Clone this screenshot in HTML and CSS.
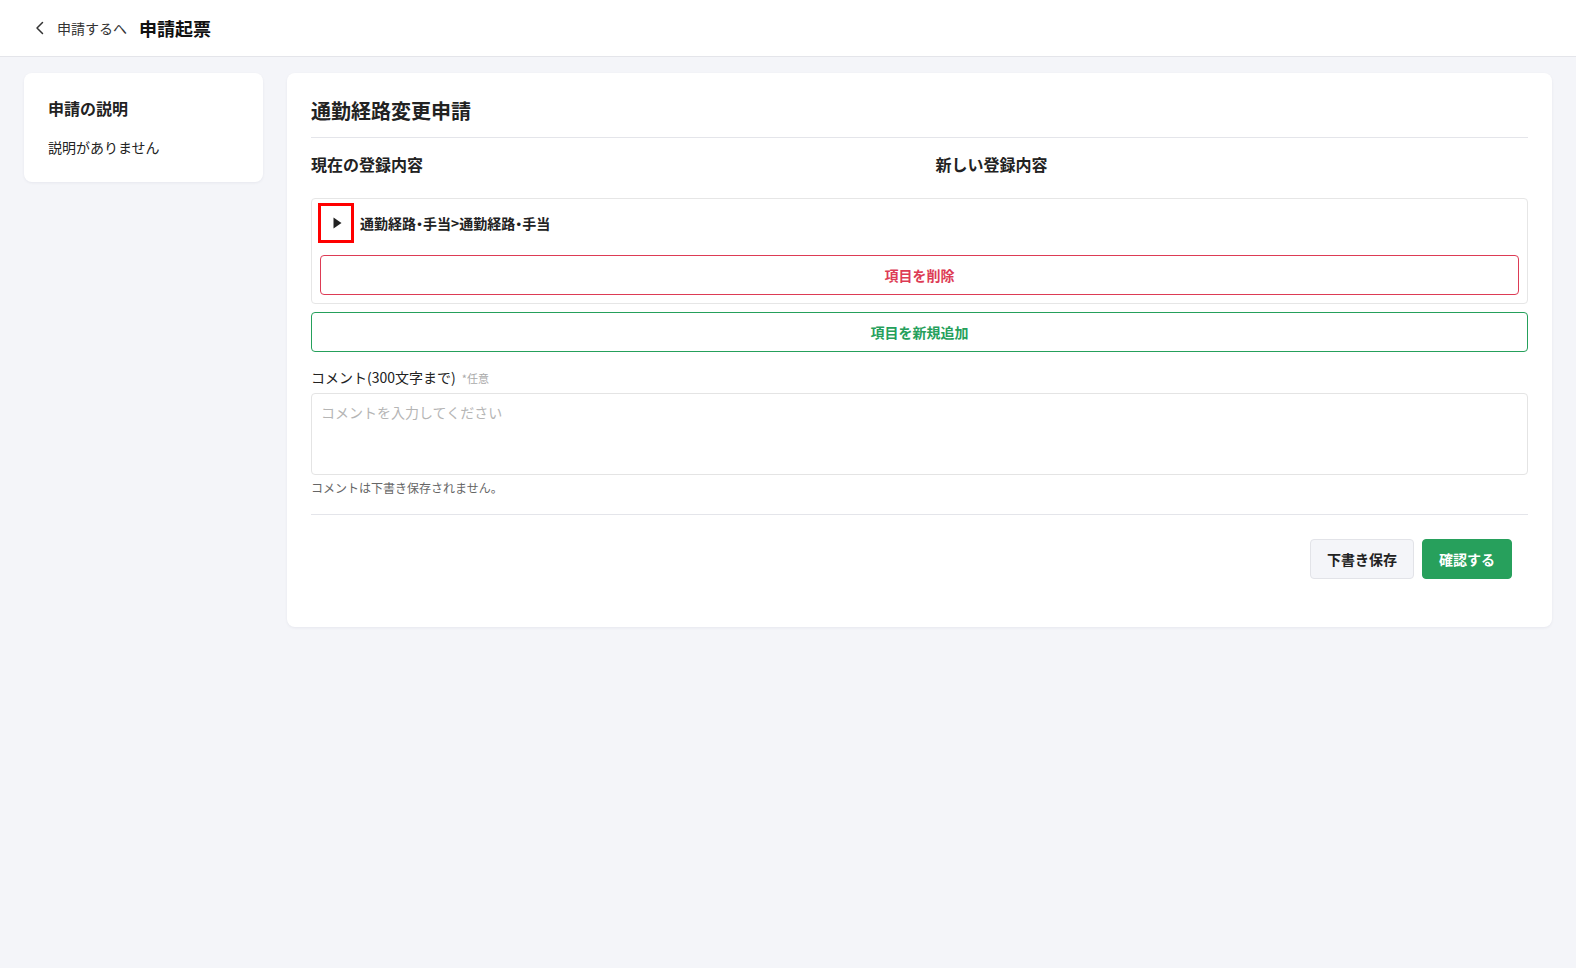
FILE: index.html
```html
<!DOCTYPE html>
<html lang="ja">
<head>
  <meta charset="UTF-8">
  <meta name="viewport" content="width=device-width, initial-scale=1.0">
  <title>申請起票</title>
  <link rel="stylesheet" href="styles.css">
</head>
<body>
  <header class="topbar">
    <a class="back" href="#">
      <svg class="back-icon" width="16" height="16" viewBox="0 0 16 16" fill="none">
        <path d="M10.5 2.5L5 8l5.5 5.5" stroke="#333" stroke-width="1.5" stroke-linecap="round" stroke-linejoin="round"/>
      </svg>
      <span>申請するへ</span>
    </a>
    <h1 class="page-title">申請起票</h1>
  </header>

  <main class="layout">
    <aside class="card side">
      <h2 class="side-title">申請の説明</h2>
      <p class="side-text">説明がありません</p>
    </aside>

    <section class="card main">
      <h2 class="form-title">通勤経路変更申請</h2>

      <div class="columns">
        <h3>現在の登録内容</h3>
        <h3>新しい登録内容</h3>
      </div>

      <div class="item">
        <div class="item-head">
          <button class="toggle" type="button">
            <svg width="12" height="12" viewBox="0 0 12 12"><path d="M2.5 0.5L10.5 6 2.5 11.5z" fill="#222"/></svg>
          </button>
          <span class="item-name">通勤経路・手当&gt;通勤経路・手当</span>
        </div>
        <button class="btn-outline danger" type="button">項目を削除</button>
      </div>

      <button class="btn-outline success" type="button">項目を新規追加</button>

      <label class="comment-label" for="comment">
        コメント(300文字まで)<span class="optional">*任意</span>
      </label>
      <textarea id="comment" class="comment" placeholder="コメントを入力してください"></textarea>
      <p class="hint">コメントは下書き保存されません。</p>

      <div class="actions">
        <button class="btn draft" type="button">下書き保存</button>
        <button class="btn confirm" type="button">確認する</button>
      </div>
    </section>
  </main>
</body>
</html>
```

FILE: styles.css
```css
* {
  box-sizing: border-box;
}
body {
  margin: 0;
  font-family: "Noto Sans CJK JP", "Noto Sans", sans-serif;
  color: #222;
  background-color: #f4f5f9;
  min-height: 968px;
}
h1, h2, h3, p {
  margin: 0;
}
button {
  font-family: inherit;
  cursor: pointer;
}

/* top bar */
.topbar {
  display: flex;
  align-items: center;
  height: 57px;
  padding: 0 0 0 32px;
  background-color: #fff;
  border-bottom: 1px solid #e4e5ea;
}
.back {
  display: flex;
  align-items: center;
  gap: 9px;
  color: #333;
  text-decoration: none;
  font-size: 14px;
}
.back-icon {
  margin-top: -1px;
}
.page-title {
  margin-left: 12px;
  font-size: 18px;
  font-weight: 700;
  color: #111;
}

/* layout */
.layout {
  display: flex;
  align-items: flex-start;
  gap: 24px;
  padding: 16px 24px;
}
.card {
  background-color: #fff;
  border-radius: 8px;
  box-shadow: 0 1px 3px rgba(20, 25, 60, 0.06);
}
.side {
  width: 239px;
  flex-shrink: 0;
  padding: 23px 24px 24px;
}
.side-title {
  font-size: 16px;
  font-weight: 700;
  line-height: 24px;
}
.side-text {
  margin-top: 16px;
  font-size: 14px;
  line-height: 22px;
}
.main {
  flex: 1;
  padding: 24px 24px 48px;
}
.form-title {
  font-size: 20px;
  font-weight: 700;
  line-height: 28px;
  padding-bottom: 12px;
  border-bottom: 1px solid #e4e5ea;
}
.columns {
  display: grid;
  grid-template-columns: 1fr 1fr;
  gap: 32px;
  padding: 14px 0 22px;
}
.columns h3 {
  font-size: 16px;
  font-weight: 700;
  line-height: 24px;
  color: #222;
}

/* item block */
.item {
  border: 1px solid #e6e6e6;
  border-radius: 4px;
  padding: 4px 8px 8px;
}
.item-head {
  display: flex;
  align-items: center;
  gap: 6px;
  margin-left: -2px;
  margin-bottom: 12px;
}
.toggle {
  display: flex;
  align-items: center;
  justify-content: center;
  width: 36px;
  height: 40px;
  padding: 0;
  background: none;
  border: 3px solid #f00;
}
.toggle svg {
  margin-left: 1px;
}
.item-name {
  font-size: 14px;
  font-weight: 700;
  font-feature-settings: "palt";
}
.btn-outline {
  display: block;
  width: 100%;
  height: 40px;
  background-color: #fff;
  border-radius: 4px;
  font-size: 14px;
  font-weight: 700;
}
.btn-outline.danger {
  color: #dd3b55;
  border: 1px solid #dd3b55;
}
.btn-outline.success {
  margin-top: 8px;
  color: #25a05b;
  border: 1px solid #25a05b;
}

/* comment */
.comment-label {
  display: block;
  margin-top: 15px;
  font-size: 14px;
  line-height: 20px;
  color: #222;
}
.optional {
  margin-left: 6px;
  font-size: 11px;
  color: #aaa;
}
.comment {
  display: block;
  width: 100%;
  height: 82px;
  margin-top: 5px;
  padding: 8px 9px;
  border: 1px solid #e4e4e4;
  border-radius: 4px;
  resize: none;
  font-family: inherit;
  font-size: 14px;
}
.comment::placeholder {
  color: #b5b5b5;
}
.hint {
  margin-top: 4px;
  font-size: 12px;
  line-height: 18px;
  color: #666;
  padding-bottom: 17px;
  border-bottom: 1px solid #e4e5ea;
}

/* footer buttons */
.actions {
  display: flex;
  justify-content: flex-end;
  gap: 8px;
  padding: 24px 16px 0;
}
.btn {
  height: 40px;
  padding: 0 16px;
  border-radius: 4px;
  font-size: 14px;
  font-weight: 700;
}
.draft {
  width: 104px;
  background-color: #f4f5f9;
  border: 1px solid #e2e3e8;
  color: #222;
}
.confirm {
  width: 90px;
  background-color: #27a05c;
  border: 1px solid #27a05c;
  color: #fff;
}
```
